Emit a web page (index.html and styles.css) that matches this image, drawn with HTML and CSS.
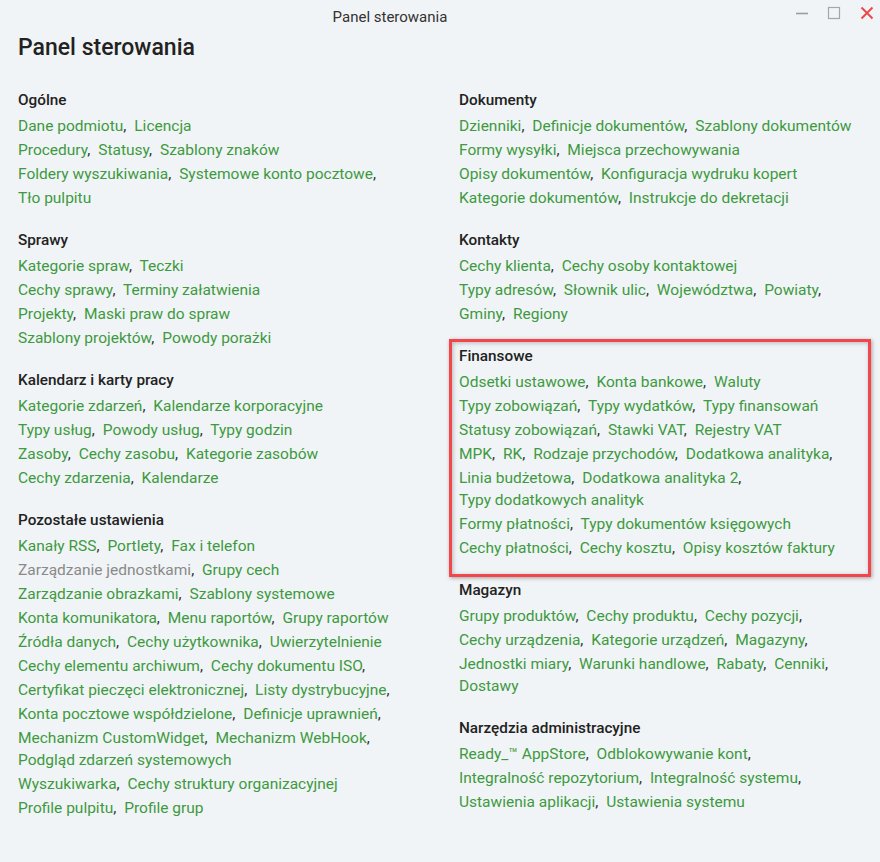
FILE: index.html
```html
<!DOCTYPE html>
<html lang="pl">

<head>
    <meta charset="UTF-8" />
    <meta name="viewport" content="width=device-width, initial-scale=1.0" />
    <title>Panel sterowania</title>

    <link rel="stylesheet" href="styles.css">
</head>

<body>
    <div class="titlebar">
        <div class="window-title">Panel sterowania</div>
        <div class="window-buttons">
            <span class="win-btn">
                <svg width="14" height="14" viewBox="0 0 14 14"><path d="M1 7.5h12" stroke="#9a9ea2" stroke-width="1.6" /></svg>
            </span>
            <span class="win-btn">
                <svg width="14" height="14" viewBox="0 0 14 14"><rect x="1.5" y="1.5" width="11" height="11" fill="none" stroke="#a3a7ab" stroke-width="1.2" /></svg>
            </span>
            <span class="win-btn close">
                <svg width="14" height="14" viewBox="0 0 14 14"><path d="M1.5 1.5l11 11M12.5 1.5l-11 11" stroke="#ea4a4c" stroke-width="2" /></svg>
            </span>
        </div>
    </div>

    <h1 class="header">Panel sterowania</h1>

    <div class="columns">
        <div class="column">
            <div class="section">
                <h2>Ogólne</h2>
                <div class="row"><a href="#">Dane podmiotu</a><i>,</i> <a href="#">Licencja</a></div>
                <div class="row"><a href="#">Procedury</a><i>,</i> <a href="#">Statusy</a><i>,</i> <a href="#">Szablony znaków</a></div>
                <div class="row"><a href="#">Foldery wyszukiwania</a><i>,</i> <a href="#">Systemowe konto pocztowe</a><i>,</i></div>
                <div class="row"><a href="#">Tło pulpitu</a></div>
            </div>

            <div class="section">
                <h2>Sprawy</h2>
                <div class="row"><a href="#">Kategorie spraw</a><i>,</i> <a href="#">Teczki</a></div>
                <div class="row"><a href="#">Cechy sprawy</a><i>,</i> <a href="#">Terminy załatwienia</a></div>
                <div class="row"><a href="#">Projekty</a><i>,</i> <a href="#">Maski praw do spraw</a></div>
                <div class="row"><a href="#">Szablony projektów</a><i>,</i> <a href="#">Powody porażki</a></div>
            </div>

            <div class="section">
                <h2>Kalendarz i karty pracy</h2>
                <div class="row"><a href="#">Kategorie zdarzeń</a><i>,</i> <a href="#">Kalendarze korporacyjne</a></div>
                <div class="row"><a href="#">Typy usług</a><i>,</i> <a href="#">Powody usług</a><i>,</i> <a href="#">Typy godzin</a></div>
                <div class="row"><a href="#">Zasoby</a><i>,</i> <a href="#">Cechy zasobu</a><i>,</i> <a href="#">Kategorie zasobów</a></div>
                <div class="row"><a href="#">Cechy zdarzenia</a><i>,</i> <a href="#">Kalendarze</a></div>
            </div>

            <div class="section">
                <h2>Pozostałe ustawienia</h2>
                <div class="row"><a href="#">Kanały RSS</a><i>,</i> <a href="#">Portlety</a><i>,</i> <a href="#">Fax i telefon</a></div>
                <div class="row"><a href="#" class="disabled">Zarządzanie jednostkami</a><i>,</i> <a href="#">Grupy cech</a></div>
                <div class="row"><a href="#">Zarządzanie obrazkami</a><i>,</i> <a href="#">Szablony systemowe</a></div>
                <div class="row"><a href="#">Konta komunikatora</a><i>,</i> <a href="#">Menu raportów</a><i>,</i> <a href="#">Grupy raportów</a></div>
                <div class="row"><a href="#">Źródła danych</a><i>,</i> <a href="#">Cechy użytkownika</a><i>,</i> <a href="#">Uwierzytelnienie</a></div>
                <div class="row"><a href="#">Cechy elementu archiwum</a><i>,</i> <a href="#">Cechy dokumentu ISO</a><i>,</i></div>
                <div class="row"><a href="#">Certyfikat pieczęci elektronicznej</a><i>,</i> <a href="#">Listy dystrybucyjne</a><i>,</i></div>
                <div class="row"><a href="#">Konta pocztowe współdzielone</a><i>,</i> <a href="#">Definicje uprawnień</a><i>,</i></div>
                <div class="row"><a href="#">Mechanizm CustomWidget</a><i>,</i> <a href="#">Mechanizm WebHook</a><i>,</i></div>
                <div class="row cont"><a href="#">Podgląd zdarzeń systemowych</a></div>
                <div class="row"><a href="#">Wyszukiwarka</a><i>,</i> <a href="#">Cechy struktury organizacyjnej</a></div>
                <div class="row"><a href="#">Profile pulpitu</a><i>,</i> <a href="#">Profile grup</a></div>
            </div>
        </div>

        <div class="column">
            <div class="section">
                <h2>Dokumenty</h2>
                <div class="row"><a href="#">Dzienniki</a><i>,</i> <a href="#">Definicje dokumentów</a><i>,</i> <a href="#">Szablony dokumentów</a></div>
                <div class="row"><a href="#">Formy wysyłki</a><i>,</i> <a href="#">Miejsca przechowywania</a></div>
                <div class="row"><a href="#">Opisy dokumentów</a><i>,</i> <a href="#">Konfiguracja wydruku kopert</a></div>
                <div class="row"><a href="#">Kategorie dokumentów</a><i>,</i> <a href="#">Instrukcje do dekretacji</a></div>
            </div>

            <div class="section">
                <h2>Kontakty</h2>
                <div class="row"><a href="#">Cechy klienta</a><i>,</i> <a href="#">Cechy osoby kontaktowej</a></div>
                <div class="row"><a href="#">Typy adresów</a><i>,</i> <a href="#">Słownik ulic</a><i>,</i> <a href="#">Województwa</a><i>,</i> <a href="#">Powiaty</a><i>,</i></div>
                <div class="row"><a href="#">Gminy</a><i>,</i> <a href="#">Regiony</a></div>
            </div>

            <div class="section marked">
                <h2>Finansowe</h2>
                <div class="row"><a href="#">Odsetki ustawowe</a><i>,</i> <a href="#">Konta bankowe</a><i>,</i> <a href="#">Waluty</a></div>
                <div class="row"><a href="#">Typy zobowiązań</a><i>,</i> <a href="#">Typy wydatków</a><i>,</i> <a href="#">Typy finansowań</a></div>
                <div class="row"><a href="#">Statusy zobowiązań</a><i>,</i> <a href="#">Stawki VAT</a><i>,</i> <a href="#">Rejestry VAT</a></div>
                <div class="row"><a href="#">MPK</a><i>,</i> <a href="#">RK</a><i>,</i> <a href="#">Rodzaje przychodów</a><i>,</i> <a href="#">Dodatkowa analityka</a><i>,</i></div>
                <div class="row"><a href="#">Linia budżetowa</a><i>,</i> <a href="#">Dodatkowa analityka 2</a><i>,</i></div>
                <div class="row cont"><a href="#">Typy dodatkowych analityk</a></div>
                <div class="row"><a href="#">Formy płatności</a><i>,</i> <a href="#">Typy dokumentów księgowych</a></div>
                <div class="row"><a href="#">Cechy płatności</a><i>,</i> <a href="#">Cechy kosztu</a><i>,</i> <a href="#">Opisy kosztów faktury</a></div>
            </div>

            <div class="section">
                <h2>Magazyn</h2>
                <div class="row"><a href="#">Grupy produktów</a><i>,</i> <a href="#">Cechy produktu</a><i>,</i> <a href="#">Cechy pozycji</a><i>,</i></div>
                <div class="row"><a href="#">Cechy urządzenia</a><i>,</i> <a href="#">Kategorie urządzeń</a><i>,</i> <a href="#">Magazyny</a><i>,</i></div>
                <div class="row"><a href="#">Jednostki miary</a><i>,</i> <a href="#">Warunki handlowe</a><i>,</i> <a href="#">Rabaty</a><i>,</i> <a href="#">Cenniki</a><i>,</i></div>
                <div class="row cont"><a href="#">Dostawy</a></div>
            </div>

            <div class="section">
                <h2>Narzędzia administracyjne</h2>
                <div class="row"><a href="#">Ready_™ AppStore</a><i>,</i> <a href="#">Odblokowywanie kont</a><i>,</i></div>
                <div class="row"><a href="#">Integralność repozytorium</a><i>,</i> <a href="#">Integralność systemu</a><i>,</i></div>
                <div class="row"><a href="#">Ustawienia aplikacji</a><i>,</i> <a href="#">Ustawienia systemu</a></div>
            </div>
        </div>
    </div>
</body>

</html>
```

FILE: styles.css
```css
body {
    margin: 0;
    padding: 0 18px;
    background-color: #f1f4f6;
    font-family: Roboto, "Liberation Sans", sans-serif;
    color: #222;
}

.titlebar {
    display: flex;
    align-items: center;
    height: 34px;
    margin: 0 -18px;
}

.window-title {
    flex: 1;
    padding-right: 6px;
    text-align: center;
    font-size: 15px;
    color: #333;
}

.window-buttons {
    display: flex;
}

.win-btn {
    width: 32px;
    height: 34px;
    display: flex;
    align-items: center;
    justify-content: center;
    padding-bottom: 8px;
    box-sizing: border-box;
}

.win-btn.close {
    width: 30px;
    padding-left: 3px;
}

.header {
    margin: 0;
    font-size: 23px;
    line-height: 28px;
    font-weight: 500;
    color: #222;
}

.columns {
    display: grid;
    grid-template-columns: 441px 1fr;
    margin-top: 26px;
}

.section {
    margin-bottom: 19px;
}

.section h2 {
    margin: 0 0 3px;
    font-size: 15.3px;
    line-height: 24px;
    font-weight: 500;
    color: #222;
}

.row {
    margin-top: 2px;
    font-size: 15.5px;
    line-height: 22px;
    white-space: nowrap;
}

/* wrapped continuation of the previous row */
.row.cont {
    margin-top: 0;
}

.row a {
    color: #3d9a3f;
    text-decoration: none;
}

.row a.disabled {
    color: #8a8a8a;
}

.row i {
    font-style: normal;
    color: #333;
    margin-right: 4px;
}

/* highlighted group */
.marked {
    position: relative;
}

.marked::after {
    content: "";
    position: absolute;
    top: -5px;
    left: -10px;
    right: -9px;
    bottom: -18px;
    border: 3px solid #f2464b;
    box-shadow: 1px 1px 4px rgba(0, 0, 0, 0.35), inset 1px 1px 4px rgba(0, 0, 0, 0.25);
    pointer-events: none;
}
```
